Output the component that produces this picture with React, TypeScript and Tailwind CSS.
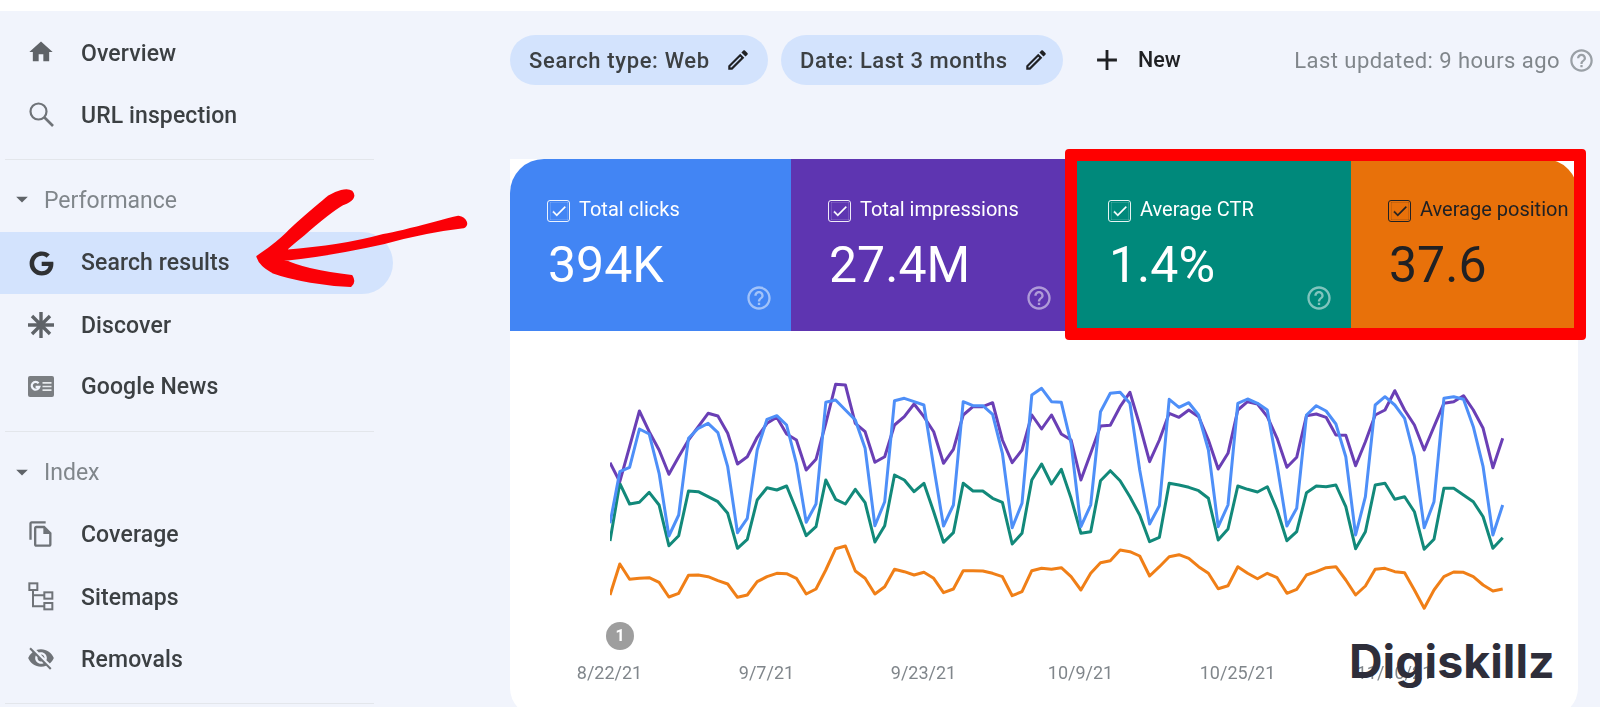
import React from "react";
import { MdHome, MdOutlineEdit, MdArrowDropDown, MdOutlineFileCopy, MdVisibilityOff, MdAdd, MdHelpOutline, MdCheck } from "react-icons/md";
import { FaGoogle } from "react-icons/fa";

const purple = [308,365,260,153,215,270,343,290,240,200,160,168,220,312,290,232,190,172,222,240,330,298,190,73,75,190,215,307,290,195,170,132,170,215,310,268,165,140,140,128,240,308,270,165,207,165,222,240,360,280,198,196,140,97,195,305,240,160,172,150,170,240,327,280,150,125,132,170,235,322,292,167,162,172,225,226,317,245,165,150,92,150,195,270,200,130,125,107,150,205,323,235];
const blue = [490,335,322,207,222,340,528,465,235,205,190,218,320,518,475,270,178,167,195,310,487,432,127,120,150,180,265,497,425,122,115,125,135,320,498,435,125,137,137,163,280,503,430,105,85,125,127,250,500,435,155,100,97,130,330,492,437,118,142,128,165,270,500,435,130,117,130,150,315,498,445,165,137,153,192,290,525,410,135,110,135,175,290,503,425,115,110,118,200,320,525,435];
const green = [543,370,432,427,397,435,557,527,393,395,410,425,460,565,538,420,383,390,378,450,527,500,360,418,432,388,428,546,497,345,360,395,370,455,547,518,370,393,393,415,427,552,520,360,312,372,328,415,520,515,362,332,362,410,465,545,532,370,375,382,392,415,540,507,378,388,396,380,450,542,515,398,378,380,375,440,566,515,375,370,418,410,455,568,538,385,385,405,425,470,565,533];
const orange = [705,612,658,655,653,667,711,700,646,645,650,662,672,712,705,665,650,640,641,655,702,687,630,566,558,633,655,702,680,628,635,645,637,655,698,687,632,632,633,640,650,707,695,632,625,628,623,650,690,640,608,602,570,575,588,648,620,590,584,595,620,640,686,677,620,640,656,640,653,700,688,645,635,623,620,660,705,678,628,625,635,638,690,745,690,650,636,637,650,675,693,687];

const pts = (a: number[]) => a.map((v, i) => `${(i * 9.81).toFixed(1)},${(v / 3).toFixed(1)}`).join(" ");

function SearchIcon() {
  return (
    <svg width="28" height="28" viewBox="0 0 28 28" fill="none" stroke="#6f7378" strokeWidth="2.2">
      <circle cx="11.5" cy="11.5" r="8" />
      <path d="M17.5 17.5L26 26" strokeWidth="2.6" />
    </svg>
  );
}
function DiscoverIcon() {
  return (
    <svg width="28" height="28" viewBox="0 0 28 28" fill="none" stroke="#5f6368" strokeWidth="3.4">
      <path d="M14 1V27M1 14H27M5 5L23 23M23 5L5 23" />
    </svg>
  );
}
function NewsIcon() {
  return (
    <svg width="28" height="24" viewBox="0 0 28 24">
      <rect x="1" y="1" width="26" height="21" rx="2" fill="#7b7e82" />
      <path d="M11.6 8.2A3.9 3.9 0 1 0 12.4 11.8H8.6" fill="none" stroke="#f1f4fc" strokeWidth="2.2" />
      <path d="M15.5 7.8H24.5M15.5 11.5H24.5M15.5 15.2H24.5" stroke="#e8eaed" strokeWidth="1.7" />
    </svg>
  );
}
function SitemapIcon() {
  return (
    <svg width="28" height="30" viewBox="80 695 84 90" fill="none" stroke="#6f7378" strokeWidth="6">
      <rect x="87" y="702" width="24" height="20" />
      <rect x="132" y="729" width="24" height="19" />
      <rect x="132" y="761" width="24" height="19" />
      <path d="M98 722V771H132M98 738H132" />
    </svg>
  );
}

function NavRow({ icon, label, active, lift }: { icon: React.ReactNode; label: string; active?: boolean; lift?: string }) {
  return (
    <div className={active ? "flex h-[62px] w-[393px] items-center rounded-r-[31px] bg-[#d3e3fd] pl-[27px]" : "flex h-[62px] w-[393px] items-center pl-[27px]"}>
      <span className="flex w-[28px] shrink-0 items-center justify-center">{icon}</span>
      <span className={`ml-[26px] text-[23px] font-medium tracking-[0.1px] text-[#3c4043] ${lift ?? ""}`}>{label}</span>
    </div>
  );
}

function SectionHead({ label, className, lift }: { label: string; className: string; lift: string }) {
  return (
    <div className={`flex items-center pl-[8px] ${className}`}>
      <MdArrowDropDown size={28} color="#5f6368" />
      <span className={`ml-[8px] text-[23px] text-[#80868b] ${lift}`}>{label}</span>
    </div>
  );
}

function Metric({ label, value, width, dark, colour }: { label: string; value: string; width: string; dark?: boolean; colour: string }) {
  return (
    <div className={`relative h-full pl-[38px] pt-[41px] ${width} ${colour} ${dark ? "text-[#202124]" : "text-white"}`}>
      <div className="-ml-[1px] flex items-center">
        <span className={`flex h-[22px] w-[23px] items-center justify-center rounded-[3px] border-[1.5px] ${dark ? "border-[#202124]" : "border-white/90"}`}>
          <MdCheck size={18} stroke="currentColor" strokeWidth={0.4} />
        </span>
        <span className="ml-[9px] -mt-[4px] whitespace-nowrap text-[20px] leading-[22px]">{label}</span>
      </div>
      <div className="mt-[13px] text-[50px] leading-[60px]">{value}</div>
      {!dark && <MdHelpOutline size={28} className="absolute bottom-[19px] right-[18px] opacity-50" />}
    </div>
  );
}

export default function App() {
  return (
    <div className="relative h-[707px] w-[1600px] overflow-hidden bg-white [font-family:Roboto,sans-serif]">
      <div className="h-[707px] overflow-hidden pt-[11px] blur-[0.4px]">
        <div className="flex h-[696px] bg-[#f1f4fc]">
          <aside className="w-[510px] shrink-0 pt-[10px]">
            <NavRow lift="pt-[4px]" icon={<MdHome size={28} color="#5f6368" />} label="Overview" />
            <NavRow lift="pt-[4px]" icon={<SearchIcon />} label="URL inspection" />
            <div className="ml-[5px] mt-[14px] h-px w-[369px] bg-[#e3e6eb]" />
            <SectionHead lift="pt-[4px]" label="Performance" className="h-[72px] pt-[6px]" />
            <NavRow active lift="pt-[1px]" icon={<FaGoogle size={25} color="#2f3133" />} label="Search results" />
            <NavRow lift="pt-[2px]" icon={<DiscoverIcon />} label="Discover" />
            <NavRow icon={<NewsIcon />} label="Google News" />
            <div className="ml-[5px] mt-[13px] h-px w-[369px] bg-[#e3e6eb]" />
            <SectionHead lift="pt-[2px]" label="Index" className="h-[71px] pt-[9px]" />
            <NavRow lift="pt-[2px]" icon={<MdOutlineFileCopy size={32} color="#6f7378" />} label="Coverage" />
            <NavRow lift="pt-[4px]" icon={<SitemapIcon />} label="Sitemaps" />
            <NavRow lift="pt-[4px]" icon={<MdVisibilityOff size={30} color="#6f7378" />} label="Removals" />
            <div className="ml-[5px] mt-[14px] h-px w-[369px] bg-[#e3e6eb]" />
          </aside>

          <main className="w-[1090px] shrink-0 pt-[24px]">
            <div className="flex h-[50px] items-center pr-[5px] text-[22px] font-medium text-[#3c4043]">
              <div className="flex h-full w-[258px] items-center rounded-[25px] bg-[#d3e3fd] pl-[19px]">
                <span className="tracking-[0.65px]">Search type: Web</span>
                <MdOutlineEdit size={26} color="#202124" className="ml-[15px]" />
              </div>
              <div className="ml-[13px] flex h-full w-[282px] items-center rounded-[25px] bg-[#d3e3fd] pl-[19px]">
                <span className="tracking-[0.55px]">Date: Last 3 months</span>
                <MdOutlineEdit size={26} color="#202124" className="ml-[15px]" />
              </div>
              <MdAdd size={34} color="#202124" className="ml-[27px]" />
              <span className="ml-[14px] text-[21.5px] text-[#202124]">New</span>
              <span className="ml-auto font-normal tracking-[0.45px] text-[#80868b]">Last updated: 9 hours ago</span>
              <MdHelpOutline size={27} color="#9aa0a6" className="ml-[8px]" />
            </div>

            <div className="relative mt-[74px] h-[557px] w-[1068px] rounded-b-[28px] bg-white">
              <div className="flex h-[172px] overflow-hidden rounded-t-[34px]">
                <Metric label="Total clicks" value="394K" width="w-[281px]" colour="bg-[#4285f4]" />
                <Metric label="Total impressions" value="27.4M" width="w-[280px]" colour="bg-[#5e35b1]" />
                <Metric label="Average CTR" value="1.4%" width="w-[280px]" colour="bg-[#00897b]" />
                <Metric label="Average position" value="37.6" width="w-[227px]" colour="bg-[#e8710a]" dark />
              </div>
              <div className="absolute left-[555px] top-[-10px] h-[191px] w-[521px] rounded-[4px] border-[12px] border-[#ff0000]" />

              <svg width="900" height="260" viewBox="0 0 900 260" fill="none" strokeWidth="3" strokeLinejoin="round" className="ml-[100px] mt-[29px]">
                <polyline points={pts(orange)} stroke="#f07f17" />
                <polyline points={pts(green)} stroke="#12897a" />
                <polyline points={pts(purple)} stroke="#6a3fb5" />
                <polyline points={pts(blue)} stroke="#4e8ff8" />
              </svg>
              <div className="ml-[96px] mt-[2px] flex h-[28px] w-[28px] items-center justify-center rounded-full bg-[#9e9e9e] text-[16px] font-bold text-white">1</div>
              <div className="ml-[21px] mt-[12px] grid grid-cols-[repeat(6,157px)] text-center text-[18px] leading-[22px] text-[#80868b]">
                <span>8/22/21</span>
                <span>9/7/21</span>
                <span>9/23/21</span>
                <span>10/9/21</span>
                <span>10/25/21</span>
                <span>11/10/21</span>
              </div>
            </div>
          </main>
        </div>

        <svg width="480" height="350" viewBox="0 0 1440 1050" className="pointer-events-none absolute left-0 top-0">
          <path fill="#fb0007" stroke="#fb0007" strokeWidth="6" strokeLinejoin="round" d="M772 770 C800 750 830 730 860 700 C900 660 950 620 985 590 C1010 575 1040 565 1055 575 C1068 590 1055 603 1030 612 C990 635 950 670 910 705 C885 725 865 742 855 752 C950 745 1060 730 1150 705 C1230 690 1310 665 1375 650 C1400 655 1405 675 1390 682 C1320 690 1240 705 1150 730 C1060 750 950 770 850 780 C900 805 980 820 1055 828 C1062 840 1062 850 1052 858 C980 855 880 840 820 818 C800 805 780 795 772 770 Z" />
        </svg>
      </div>
      <div className="absolute left-[1349px] top-[634px] text-[46.5px] font-bold leading-[54px] text-[#2e2e3a] [font-family:Inter,sans-serif]">Digiskillz</div>
    </div>
  );
}
